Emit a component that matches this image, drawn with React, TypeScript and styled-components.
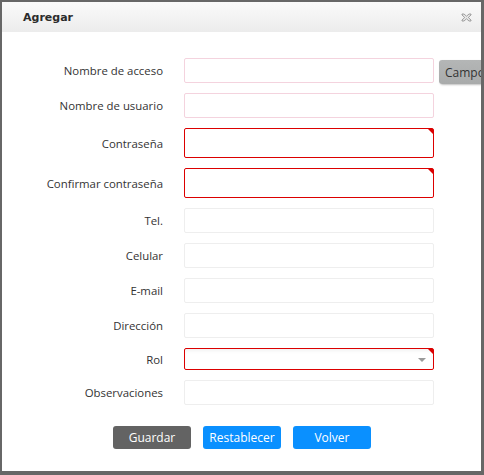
import React from "react";
import styled, { createGlobalStyle, css } from "styled-components";

const Global = createGlobalStyle`
  html, body { margin: 0; padding: 0; }
  body { background: #676767; width: 484px; height: 475px; overflow: hidden; }
  * { box-sizing: border-box; }
`;

const Win = styled.div`
  margin: 2px 0 0 2px;
  width: 479px;
  height: 469px;
  background: #fff;
  overflow: hidden;
  display: flex;
  flex-direction: column;
`;

const Header = styled.div`
  height: 30px;
  flex: none;
  display: flex;
  align-items: center;
  justify-content: space-between;
  padding: 0 9px 0 21px;
  background: linear-gradient(#fafafa, #ececec);
`;

const Title = styled.div`
  font-family: "DejaVu Sans", Verdana, sans-serif;
  font-weight: bold;
  font-size: 11px;
  color: #2b2b2b;
`;

const Close = styled.svg`
  width: 11px;
  height: 9px;
  display: block;
`;

const Form = styled.div`
  display: grid;
  grid-template-columns: 161px 250px;
  column-gap: 21px;
  row-gap: 10px;
  padding-top: 26px;
  align-items: center;
`;

const Label = styled.div`
  font-family: "Open Sans", "Noto Sans", sans-serif;
  font-size: 11.4px;
  color: #333;
  text-align: right;
  white-space: nowrap;
`;

type Tone = "pink" | "red" | "plain";

const Field = styled.div<{ $tone: Tone; $h: number }>`
  position: relative;
  height: ${(p) => p.$h}px;
  border: 1px solid
    ${(p) => (p.$tone === "pink" ? "#f4d3de" : p.$tone === "red" ? "#dc0000" : "#eeeeee")};
  border-radius: 2px;
  background: #fff;
  ${(p) =>
    p.$tone === "red" &&
    css`
      &::after {
        content: "";
        position: absolute;
        top: 0;
        right: 0;
        border-style: solid;
        border-width: 0 5px 5px 0;
        border-color: transparent #dc0000 transparent transparent;
      }
    `}
`;

const SelectBox = styled(Field)`
  box-shadow: inset 0 3px 4px -2px rgba(0, 0, 0, 0.08);
`;

const Arrow = styled.span`
  position: absolute;
  right: 7px;
  top: 9px;
  border-style: solid;
  border-width: 4px 4px 0 4px;
  border-color: #9a9a9a transparent transparent transparent;
`;

const Tip = styled.div`
  position: absolute;
  left: calc(100% + 6px);
  top: 1px;
  height: 24px;
  padding: 0 8px 0 6px;
  display: flex;
  align-items: center;
  background: linear-gradient(#b4b6b6, #a9abab);
  border-radius: 3px;
  box-shadow: 1px 1px 2px rgba(0, 0, 0, 0.25);
  font-family: "Open Sans", "Noto Sans", sans-serif;
  font-size: 12px;
  color: #333;
  white-space: nowrap;
`;

const Buttons = styled.div`
  display: flex;
  justify-content: center;
  gap: 12px;
  margin-top: 21px;
  padding-left: 1px;
`;

const Btn = styled.button<{ $kind: "dark" | "blue" }>`
  width: 78px;
  height: 23px;
  border: none;
  border-radius: 3px;
  background: ${(p) => (p.$kind === "dark" ? "#636363" : "#0a90ff")};
  color: #fff;
  font-family: "Open Sans", "Noto Sans", sans-serif;
  font-size: 12px;
  padding: 0;
  cursor: pointer;
`;

const rows: { label: string; tone: Tone; h: number; tip?: string; select?: boolean }[] = [
  { label: "Nombre de acceso", tone: "pink", h: 25, tip: "Campo" },
  { label: "Nombre de usuario", tone: "pink", h: 25 },
  { label: "Contraseña", tone: "red", h: 30 },
  { label: "Confirmar contraseña", tone: "red", h: 30 },
  { label: "Tel.", tone: "plain", h: 25 },
  { label: "Celular", tone: "plain", h: 25 },
  { label: "E-mail", tone: "plain", h: 25 },
  { label: "Dirección", tone: "plain", h: 25 },
  { label: "Rol", tone: "red", h: 22, select: true },
  { label: "Observaciones", tone: "plain", h: 25 },
];

export default function App() {
  return (
    <>
      <Global />
      <Win>
        <Header>
          <Title>Agregar</Title>
          <Close viewBox="0 0 11 9">
            <path
              d="M1 1 L3 1 L5.5 3.2 L8 1 L10 1 L10 2 L7.3 4.5 L10 7 L10 8 L8 8 L5.5 5.8 L3 8 L1 8 L1 7 L3.7 4.5 L1 2 Z"
              fill="#e6e6e6"
              stroke="#8c8c8c"
              strokeWidth="0.8"
            />
          </Close>
        </Header>
        <Form>
          {rows.map((r) => (
            <React.Fragment key={r.label}>
              <Label>{r.label}</Label>
              {r.select ? (
                <SelectBox $tone={r.tone} $h={r.h}>
                  <Arrow />
                </SelectBox>
              ) : (
                <Field $tone={r.tone} $h={r.h}>
                  {r.tip && <Tip>{r.tip}</Tip>}
                </Field>
              )}
            </React.Fragment>
          ))}
        </Form>
        <Buttons>
          <Btn $kind="dark">Guardar</Btn>
          <Btn $kind="blue">Restablecer</Btn>
          <Btn $kind="blue">Volver</Btn>
        </Buttons>
      </Win>
    </>
  );
}
